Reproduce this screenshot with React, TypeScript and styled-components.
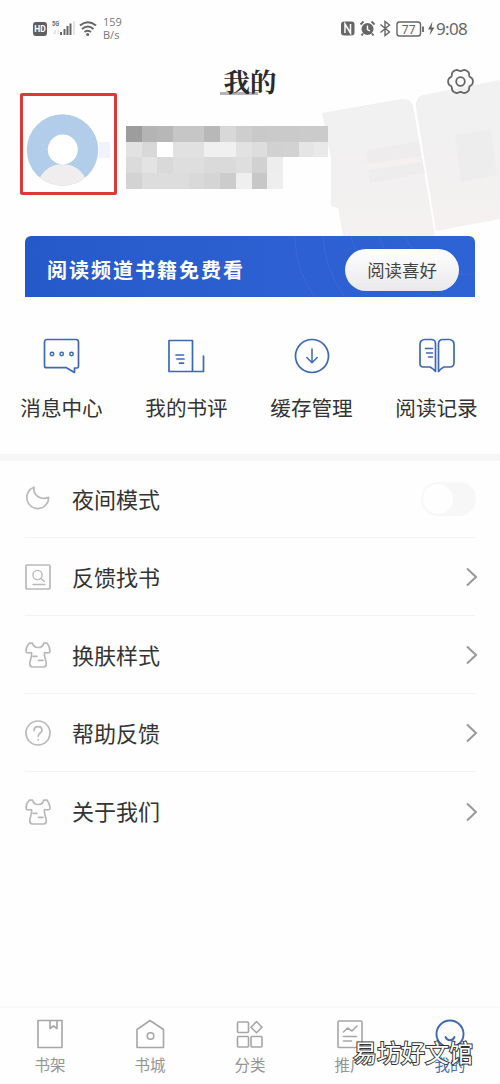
import React from 'react';
import styled, { createGlobalStyle } from 'styled-components';

const GlobalStyle = createGlobalStyle`
  * { box-sizing: border-box; }
  body {
    margin: 0;
    background: #fefefe;
    font-family: Roboto, 'Noto Sans CJK SC', sans-serif;
    color: #333;
  }
`;

const Screen = styled.div`
  position: relative;
  width: 500px;
  height: 1084px;
  display: flex;
  flex-direction: column;
  overflow: hidden;
  background: #fefefe;
`;

const Backdrop = styled.svg`
  position: absolute;
  left: 300px;
  top: 75px;
`;

const StatusBar = styled.div`
  display: flex;
  justify-content: space-between;
  height: 56px;
  padding: 0 32px 0 32px;
`;

const StatusGroup = styled.div`
  display: flex;
  align-items: center;
  height: 56px;
`;

const Speed = styled.div`
  margin-left: 6px;
  font: 11px/13px 'Open Sans', sans-serif;
  color: #777;
`;

const Clock = styled.div`
  margin-left: 1px;
  padding-top: 2px;
  font: 17px/20px 'Noto Sans', sans-serif;
  letter-spacing: -0.7px;
  width: 32px;
  color: #666;
`;

const Header = styled.header`
  position: relative;
  display: grid;
  grid-template-columns: 1fr auto 1fr;
  align-items: center;
  height: 50px;
  padding: 0 25px;
  svg { justify-self: end; }
`;

const Title = styled.h1`
  grid-column: 2;
  margin: 0;
  padding: 0 4px;
  font: 700 26.5px/34px 'Noto Serif CJK SC', 'Noto Sans CJK SC', serif;
  color: #2b2b2b;
  background: linear-gradient(#b4b4b4, #b4b4b4) 0 28px / 38px 3px no-repeat;
`;

const Profile = styled.section`
  position: relative;
  display: flex;
  align-items: flex-start;
  height: 130px;
  padding: 0 20px;
`;

const AvatarFrame = styled.div`
  display: flex;
  width: 97px;
  height: 102px;
  margin-top: -13px;
  border: 3px solid #dc3935;
  border-radius: 2px;
`;

const Mosaic = styled.div`
  display: grid;
  grid-template-columns: repeat(12, 15.7px) 13.5px;
  grid-auto-rows: 15.7px;
  margin: 20px 0 0 9px;
`;

const Pixel = styled.span<{ $tone: string }>`
  background: ${(p) => p.$tone};
`;

const Banner = styled.section`
  position: relative;
  display: flex;
  align-items: center;
  justify-content: space-between;
  height: 61px;
  margin: 0 25px;
  padding: 7px 16px 0 22px;
  border-radius: 6px 6px 0 0;
  background: linear-gradient(90deg, #2659c8, #2d60d2 60%, #2e63d5);
  overflow: hidden;
`;

const BannerWaves = styled.svg`
  position: absolute;
  right: 0;
  top: 0;
`;

const BannerText = styled.strong`
  font-size: 20px;
  line-height: 30px;
  padding-top: 1px;
  font-weight: 700;
  letter-spacing: 2px;
  color: #fff;
`;

const PillButton = styled.button`
  position: relative;
  width: 114px;
  height: 42px;
  padding: 0;
  border: 0;
  border-radius: 21px;
  background: linear-gradient(#fff, #e9e9ec);
  font: 17.4px/42px 'Noto Sans CJK SC', sans-serif;
  color: #444;
`;

const QuickActions = styled.nav`
  display: grid;
  grid-template-columns: repeat(4, 125px);
  height: 157px;
  padding-top: 41px;
  margin-left: -1px;
`;

const QuickAction = styled.a`
  display: flex;
  flex-direction: column;
  align-items: center;
  gap: 20px;
  font-size: 20.6px;
  line-height: 30px;
  white-space: nowrap;
  color: #333;
`;

const Band = styled.div`
  height: 7px;
  background: #f6f6f6;
`;

const Menu = styled.ul`
  flex: 1;
  margin: 0;
  padding: 0 25px;
  list-style: none;
`;

const MenuRow = styled.li`
  display: flex;
  align-items: center;
  height: 77.9px;
  padding-top: 2px;
  border-bottom: 1px solid #f3f3f3;
  &:first-child { height: 77px; padding-top: 0; }
  &:last-child { border-bottom: 0; }
  > svg:last-child { margin-right: -3px; }
`;

const MenuLabel = styled.span`
  flex: 1;
  margin-left: 21px;
  padding-top: 3px;
  font-size: 22px;
  line-height: 32px;
  color: #333;
`;

const Toggle = styled.span`
  display: flex;
  width: 55px;
  height: 34px;
  margin-right: -1px;
  padding: 2px;
  border-radius: 17px;
  background: #f7f7f7;
`;

const Knob = styled.span`
  width: 30px;
  height: 30px;
  border-radius: 50%;
  background: #fefefe;
`;

const TabBar = styled.nav`
  display: grid;
  grid-template-columns: repeat(5, 1fr);
  height: 78px;
  border-top: 2px solid #f8f8f8;
`;

const Tab = styled.a<{ $active?: boolean }>`
  display: flex;
  flex-direction: column;
  align-items: center;
  padding-top: 11px;
  font-size: 15.5px;
  line-height: 22px;
  gap: 6px;
  color: ${(p) => (p.$active ? '#4c70b4' : '#959595')};
`;

const Watermark = styled.div`
  position: absolute;
  left: 353px;
  top: 1034px;
  font: 24px/36px 'Noto Sans CJK SC', sans-serif;
  white-space: nowrap;
  color: #fff;
  -webkit-text-stroke: 2px #333;
  paint-order: stroke fill;
`;

type IconProps = { w: number; h: number; color: string; sw?: number; children: React.ReactNode };
const Icon = ({ w, h, color, sw = 1.7, children }: IconProps) => (
  <svg width={w} height={h} viewBox={`0 0 ${w} ${h}`} fill="none" stroke={color} strokeWidth={sw} strokeLinejoin="round" strokeLinecap="round">
    {children}
  </svg>
);

const BLUE = '#3f68b2';
const GREY = '#b9b9b9';
const TAB = '#a6a6a6';

const mosaic = [
  '#9d9d9d #b4b4b4 #b7b7b7 #c6c6c6 #c6c6c6 #b8b8b8 #d8d8d8 #cecece #c9c9c9 #cacaca #cacaca #cbcbcb #cbcbcb',
  '#e2e2e2 #d8d8d8 #ffffff #e1e1e1 #e1e1e1 #f0f0f0 #f0f0f0 #e2e2e2 #dddddd #d1d1d1 #d2d2d2 #e5e5e5 #e9e9e9',
  '#dbdbdb #e3e3e3 #d9d9d9 #dedede #dedede #dadada #dadada #dedede #d1d1d1 #ededed transparent transparent transparent',
  '#d3d3d3 #dddddd #dddddd #dddddd #d9d9d9 #d5d5d5 #cccccc #efefef #c7c7c7 #eeeeee transparent transparent transparent',
].flatMap((row) => row.split(' '));

// Six-lobed cog outline, sampled every five degrees.
const gearOutline = Array.from({ length: 72 }, (_, i) => {
  const a = (i * Math.PI) / 36;
  const r = 11.6 + 1.0 * Math.cos(6 * a) - 0.25 * Math.cos(12 * a);
  return `${(15.5 + r * Math.cos(a)).toFixed(2)},${(15.5 + r * Math.sin(a)).toFixed(2)}`;
}).join(' ');

const Shirt = () => (
  <Icon w={26} h={26} color={GREY}>
    <path d="M4.500 1C2.500 3 1 6.500 1 9C1 11 2.500 11.300 6.500 10.500C7.500 14 4.800 18 4.800 22C4.800 24 5.800 25 7.800 25H18.500C20.500 25 21.300 24 21.300 22C21.300 18 18.500 14 19.500 10.500C23.500 11.300 25 11 25 9C25 6.500 23.500 3 22 1L18.800 1.200C18 4.500 16 5.500 13.200 5.500S8.500 4.500 7.500 1.200z" />
    <path d="M8 14.300h4M13.500 18.300h4.500" />
  </Icon>
);

const Chevron = () => (
  <svg width="13" height="20" viewBox="0 0 13 20" fill="none" stroke="#989898" strokeWidth="2">
    <path d="M2 1.500l9 8.500L2 18.500" />
  </svg>
);

const quick = [
  {
    label: '消息中心',
    icon: (
      <Icon w={38} h={36} color={BLUE}>
        <path d="M4 1.500h29a2.500 2.500 0 0 1 2.500 2.500v24.500a1.500 1.500 0 0 1-1.500 1.500h-2.500v4.500L23.500 29.700H3.500a2 2 0 0 1-2-2V4A2.500 2.500 0 0 1 4 1.500z" />
        <g strokeWidth="1.500"><circle cx="9" cy="16" r="1.700" /><circle cx="18.700" cy="16" r="1.700" /><circle cx="28.500" cy="16" r="1.700" /></g>
      </Icon>
    ),
  },
  {
    label: '我的书评',
    icon: (
      <Icon w={38} h={36} color={BLUE}>
        <path d="M1 2.500h23.500v31H1zM24.500 33.500H35.500V18M8 17h7.500M9 21h7M11.500 25.200h4" />
      </Icon>
    ),
  },
  {
    label: '缓存管理',
    icon: (
      <Icon w={36} h={36} color={BLUE}>
        <circle cx="18" cy="18" r="16.500" />
        <path d="M18 11v13.500M12.800 19.500l5.200 5.200 5.200-5.200" strokeWidth="1.500" />
      </Icon>
    ),
  },
  {
    label: '阅读记录',
    icon: (
      <Icon w={36} h={36} color={BLUE}>
        <path d="M5.500 1.500h7a4 4 0 0 1 4 4v28c-1.500-2-3.500-3.500-5.500-4.500H4a3 3 0 0 1-3-3V6a4.500 4.500 0 0 1 4.500-4.500zM30.500 1.500h-7a4 4 0 0 0-4 4v28c1.500-2 3.500-3.500 5.500-4.500h6a4 4 0 0 0 4-4V6a4.500 4.500 0 0 0-4.500-4.500z" />
        <path d="M6.500 10.500h7M7.500 15h6M9.500 19h4" strokeWidth="1.500" />
      </Icon>
    ),
  },
];

const menu = [
  { label: '夜间模式', toggle: true, icon: <Icon w={26} h={26} color={GREY}><path d="M9 1.200A11 11 0 1 0 23.700 11.300C16.500 14.500 7.500 10 9 1.200z" /></Icon> },
  { label: '反馈找书', icon: <Icon w={26} h={26} color={GREY}><rect x="1" y="1" width="24" height="24" rx="1" /><circle cx="12.500" cy="11" r="4.600" strokeWidth="1.400" /><path d="M16 14.500l3.200 3M8 20.500h12" strokeWidth="1.400" /></Icon> },
  { label: '换肤样式', icon: <Shirt /> },
  { label: '帮助反馈', icon: <Icon w={26} h={26} color={GREY}><circle cx="13" cy="13" r="12" /><path d="M9 10.500c0-2.300 1.700-3.800 4-3.800s4 1.400 4 3.500c0 2.600-3.800 3-3.800 6M13.200 19.700v.2" /></Icon> },
  { label: '关于我们', icon: <Shirt /> },
];

const tabs = [
  { label: '书架', icon: <Icon w={30} h={30} color={TAB} sw={1.600}><path d="M3 1.500h24v27H3zM15 1.500v8l3.500-2.500L22 9.500v-8" /></Icon> },
  { label: '书城', icon: <Icon w={30} h={30} color={TAB} sw={1.600}><path d="M2 10.500L15 1.500l13.500 9v18H2z" /><circle cx="15.500" cy="17" r="3.300" /></Icon> },
  { label: '分类', icon: <Icon w={30} h={30} color={TAB} sw={1.600}><rect x="2.500" y="3" width="11" height="10.500" rx="1" /><rect x="2.500" y="17.500" width="11" height="10.500" rx="1" /><rect x="16" y="17.500" width="11" height="10.500" rx="1" /><path d="M21.500 2.500l5.500 5.700-5.500 5.600-5.500-5.600z" /></Icon> },
  { label: '推广', icon: <Icon w={30} h={30} color={TAB} sw={1.600}><rect x="3" y="2" width="24" height="26.500" rx="1" /><path d="M8.500 13l4-4 4.500 3 5-5M8.500 17.500h13M8.500 22h8" /></Icon> },
  { label: '我的', active: true, icon: <Icon w={30} h={30} color={BLUE} sw={1.900}><circle cx="15" cy="15" r="13.500" /><path d="M10.500 18c1 2.200 2.500 3.200 4.500 3.200s3.500-1 4.500-3.200" /></Icon> },
];

export default function App() {
  return (
    <>
      <GlobalStyle />
      <Screen>
        <Backdrop width="200" height="165" viewBox="0 0 200 165">
          <defs>
            <linearGradient id="page" x1="0" y1="0" x2="0" y2="1">
              <stop offset="0" stopColor="#f1f1f1" />
              <stop offset=".6" stopColor="#f2f0f0" />
              <stop offset="1" stopColor="#f5f1f1" />
            </linearGradient>
          </defs>
          <path d="M22 38L101 24q9-1 12 6l22 131H43l-5-28-7-2V83z" fill="url(#page)" />
          <path d="M116 32q-1-10 7-12l77-15v139l-64 12z" fill="url(#page)" />
          <path d="M66 76L118 66l7 32-55 10z" fill="#eeecec" />
          <path d="M60 90l61-9 2 6-61 9z" fill="#f4f0f0" />
          <path d="M155 60l36-6 6 46-36 7z" fill="#ededed" />
        </Backdrop>

        <StatusBar>
          <StatusGroup>
            <svg width="65" height="20" viewBox="0 0 65 20">
              <rect x="1" y="4" width="14" height="14" rx="3" fill="#5f5f5f" />
              <text x="8" y="14.400" textAnchor="middle" fontFamily="Roboto" fontWeight="700" fontSize="8.500" fill="#fff">HD</text>
              <text x="20" y="8" textLength="7" lengthAdjust="spacingAndGlyphs" fontFamily="Roboto" fontWeight="700" fontSize="7.500" fill="#666">5G</text>
              <path d="M23 12v4M21.500 14.500L23 16M26 16v-4" stroke="#ccc" fill="none" strokeWidth=".8" />
              <path d="M29 17v-3M32.500 17v-6M35.500 17V8M38.500 17V5.500" stroke="#666" strokeWidth="2" />
              <path d="M42 17V3" stroke="#e3e3e3" strokeWidth="2" />
              <path d="M48 7.500q7.500-6.500 16 0M50 11q6-5 11.500 0M52.500 14q3.500-2.500 6.500 0" stroke="#666" strokeWidth="2" fill="none" />
              <circle cx="55.700" cy="16.500" r="1.500" fill="#666" />
            </svg>
            <Speed>159<br />B/s</Speed>
          </StatusGroup>
          <StatusGroup>
            <svg width="94" height="20" viewBox="0 0 94 20" fill="none" stroke="#666" strokeWidth="1.400">
              <rect x="0" y="3.500" width="13.500" height="14" rx="3" fill="#666" stroke="none" />
              <path d="M4 15V6l5.500 9V6" stroke="#fff" strokeWidth="1.500" />
              <circle cx="26.500" cy="11" r="6" fill="#666" stroke="none" />
              <path d="M19.500 6.500l3-3M30.500 3.500l3 3M22 15.500l-1.500 2M31 15.500l1.500 2" strokeWidth="1.800" />
              <path d="M26.500 7.500v4l2.500 1.500" stroke="#fff" />
              <path d="M39.500 6.500l9 7.500-4.500 3.500v-14l4.500 3.500-9 7.500" />
              <rect x="56" y="4" width="23.500" height="14" rx="2.500" />
              <text x="67.700" y="15.500" textAnchor="middle" fontFamily="Noto Sans" fontSize="12" fill="#666" stroke="none">77</text>
              <path d="M82 8.500v5.500" strokeWidth="1.800" />
              <path d="M91.500 3.500l-4.500 8h3l-1.500 6 5-8h-3z" fill="#666" stroke="none" />
            </svg>
            <Clock>9:08</Clock>
          </StatusGroup>
        </StatusBar>

        <Header>
          <Title>我的</Title>
          <Icon w={30} h={30} color="#666" sw={1.800}>
            <polygon points={gearOutline} />
            <circle cx="15.500" cy="15.500" r="4.300" />
          </Icon>
        </Header>

        <Profile>
          <AvatarFrame>
            <svg width="91" height="96" viewBox="0 0 91 96">
              <defs><clipPath id="face"><circle cx="39.500" cy="54" r="35.700" /></clipPath></defs>
              <rect x="76" y="46" width="11" height="16" fill="#f0f3fd" />
              <g clipPath="url(#face)">
                <rect width="91" height="96" fill="#b1cde9" />
                <ellipse cx="39.500" cy="92" rx="25" ry="24" fill="#efeded" />
                <circle cx="39.800" cy="53.500" r="15" fill="#fff" />
              </g>
            </svg>
          </AvatarFrame>
          <Mosaic>{mosaic.map((tone, i) => <Pixel key={i} $tone={tone} />)}</Mosaic>
        </Profile>

        <Banner>
          <BannerWaves width="190" height="61" viewBox="0 0 190 61" fill="none" stroke="#3c69d5" strokeWidth="1">
            <path d="M10 0q0 35 20 61M38 0q2 35 22 61M66 0q2 8 5 14M94 0q3 8 6 14M120 0q4 9 8 14M170 38h20" />
          </BannerWaves>
          <BannerText>阅读频道书籍免费看</BannerText>
          <PillButton>阅读喜好</PillButton>
        </Banner>

        <QuickActions>
          {quick.map((q) => <QuickAction key={q.label}>{q.icon}<span>{q.label}</span></QuickAction>)}
        </QuickActions>

        <Band />

        <Menu>
          {menu.map((m) => (
            <MenuRow key={m.label}>
              {m.icon}
              <MenuLabel>{m.label}</MenuLabel>
              {m.toggle ? <Toggle><Knob /></Toggle> : <Chevron />}
            </MenuRow>
          ))}
        </Menu>

        <TabBar>
          {tabs.map((t) => <Tab key={t.label} $active={t.active}>{t.icon}<span>{t.label}</span></Tab>)}
        </TabBar>
        <Watermark>易坊好文馆</Watermark>
      </Screen>
    </>
  );
}
